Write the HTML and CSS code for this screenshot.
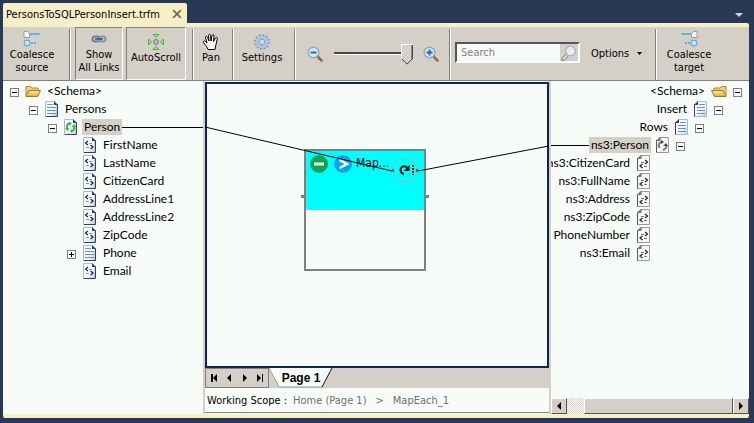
FILE: index.html
```html
<!DOCTYPE html>
<html lang="en">
<head>
<meta charset="utf-8">
<title>PersonsToSQLPersonInsert.trfm</title>
<link rel="stylesheet" href="styles.css">
</head>
<body>
<svg class="defs" aria-hidden="true">
  <defs>
    <linearGradient id="paper" x1="0" y1="0" x2="1" y2="1"><stop offset="0" stop-color="#fff"/><stop offset=".6" stop-color="#f4f7fc"/><stop offset="1" stop-color="#c2cbe0"/></linearGradient>
    <linearGradient id="gold" x1="0" y1="0" x2="0" y2="1"><stop offset="0" stop-color="#fff0a8"/><stop offset="1" stop-color="#e9a93c"/></linearGradient>
    <symbol id="folder" viewBox="0 0 16 14"><path d="M1 12V2.500h4.500l1.500 1.500h6v8z" fill="#f0d070" stroke="#b18a35"/><path d="M1 12.500L4 6.500h11.500L12.500 12.500z" fill="url(#gold)" stroke="#a87925"/></symbol>
    <symbol id="sheet" viewBox="0 0 13 16"><path d="M.5 .5h8.500l3 3v12H.5z" fill="url(#paper)" stroke="#a9b8d4"/><path d="M12.500 3.500v12H1" fill="none" stroke="#343c70"/><path d="M9 0l4 4H9z" fill="#343c70"/></symbol>
    <symbol id="doc" viewBox="0 0 13 16"><use href="#sheet"/><path d="M2 3.500h6M2 6.500h9M2 9.500h9M2 12.500h9" stroke="#5c92db"/></symbol>
    <symbol id="leaf" viewBox="0 0 13 16"><use href="#sheet"/><path d="M5 4L2.500 6 5 8M7.500 8l2.500 2-2.500 2" fill="none" stroke="#222" stroke-width="1.200"/><path d="M6 6.500h3M3 10.500h3" stroke="#6aa3bd"/></symbol>
    <symbol id="loop" viewBox="0 0 13 16"><use href="#sheet"/><path d="M5.500 4.500C3 5 2.500 7 3 10M7.500 12.500c2.500-1 3-3 2.500-5.500" fill="none" stroke="#36bd36" stroke-width="2"/><path d="M5 2.500l3 2-3 2zM1 9h4.500l-2 3zM7.500 8l2.500-3 2 3zM8 10v4l-2-2z" fill="#36bd36"/></symbol>
    <symbol id="rsheet" viewBox="0 0 13 16"><path d="M4 .5h8.500v15H.5v-12z" fill="#f6f6f2" stroke="#999"/><path d="M4 .5v3H.5M.5 3.500v12" fill="none" stroke="#555"/><path d="M0 4l4-4v4z" fill="#777"/></symbol>
    <symbol id="rdoc" viewBox="0 0 13 16"><path d="M4 .5h8.500v15H.5v-12z" fill="url(#paper)" stroke="#a9b8d4"/><path d="M.5 3.500v12" fill="none" stroke="#343c70"/><path d="M0 4l4-4v4z" fill="#343c70"/><path d="M5 3.500h6M3 6.500h8M3 9.500h8M3 12.500h8" stroke="#5c92db"/></symbol>
    <symbol id="rleaf" viewBox="0 0 13 16"><use href="#rsheet"/><path d="M8 5l2.500 2L8 9M5.500 9L3 11l2.500 2" fill="none" stroke="#222" stroke-width="1.200"/><path d="M4 7.500h3M7 11.500h3" stroke="#777"/></symbol>
    <symbol id="rloop" viewBox="0 0 13 16"><use href="#rsheet"/><path d="M6 5C3 5 2 8 3.500 11M7 13c3-1 4-3 3-5" fill="none" stroke="#777" stroke-width="2"/><path d="M5 3l3 2-3 2zM7 9l3-3 2 3z" fill="#444"/></symbol>
    <symbol id="lens" viewBox="0 0 16 16"><path d="M10.500 10.500l4 4" stroke="#9b6a40" stroke-width="2.600" stroke-linecap="round"/><circle cx="6.500" cy="6.500" r="5.300" fill="#d6eafb" stroke="#9ba5b2" stroke-width="1.500"/></symbol>
    <symbol id="link-page" viewBox="0 0 16 16"><path d="M1 .5h3.500l2 2v4H1z" fill="#fff" stroke="#999"/><path d="M7 3h10" stroke="#3ba4dc" stroke-width="1.400"/><circle cx="4" cy="12" r="3" fill="#c4e4f8" stroke="#4f9fd2"/><path d="M8 12h2M11 12h2" stroke="#3ba4dc" stroke-width="1.400"/></symbol>
  </defs>
</svg>
<header class="tabs">
  <div class="file-tab"><span>PersonsToSQLPersonInsert.trfm</span>
    <button class="close" aria-label="Close"><svg width="10" height="8" viewBox="0 0 10 8"><path d="M1 0l8 8M9 0L1 8" stroke="#75633d" stroke-width="1.700"/></svg></button></div>
  <button class="tab-list" aria-label="Open documents"><svg width="8" height="4"><path d="M0 0h8L4 4z" fill="#ced4df"/></svg></button>
</header>
<main class="frame">
  <div class="toolbar">
    <button class="tool coalesce"><svg width="18" height="16"><use href="#link-page" width="16" height="16"/><path d="M15 3h2" stroke="#3ba4dc"/></svg><span>Coalesce<br>source</span></button>
    <i class="sep"></i>
    <button class="tool pressed show"><svg width="16" height="16" viewBox="0 0 16 16"><g fill="none"><rect x="1.500" y="5.500" width="7" height="5" rx="2.500" stroke="#6c7f9a" stroke-width="2"/><rect x="7.500" y="5.500" width="7" height="5" rx="2.500" stroke="#8296b0" stroke-width="2"/><path d="M4 8h8" stroke="#354d70" stroke-width="1.500"/></g></svg><span>Show<br>All Links</span></button>
    <button class="tool pressed short auto"><svg width="18" height="18" viewBox="0 0 18 18"><g fill="#a5e39a" stroke="#40b830"><path d="M6 1.500h6l-3 3zM6 16.500h6l-3-3zM1.500 6v6l3-3zM16.500 6v6l-3-3z"/></g><circle cx="9" cy="9" r="2.500" fill="#bbb" stroke="#777"/></svg><span>AutoScroll</span></button>
    <i class="sep"></i>
    <button class="tool short pan"><svg width="18" height="18" viewBox="0 0 18 18"><path d="M6 16.500C5 13 3 12 1.500 9.500c-.5-1.500 1-2 2-1L5 10 3.500 4.500c0-1.500 1.500-1.500 2 0L7 8 6.500 2.500c0-1.500 2-1.500 2 0L9 8l1-5.500c.3-1.300 2-1 2 .3L11.500 8.500 13.500 5c.7-1.200 2-.5 1.800.6L14 11.500c-.3 2-1 3-1 5z" fill="#fff" stroke="#000"/></svg><span>Pan</span></button>
    <i class="sep"></i>
    <button class="tool short settings"><svg width="18" height="18" viewBox="0 0 18 18"><circle cx="9" cy="9" r="6.800" fill="none" stroke="#769bc4" stroke-width="2" stroke-dasharray="2 1.560"/><circle cx="9" cy="9" r="4.500" fill="none" stroke="#a9c6e4" stroke-width="3.500"/><circle cx="9" cy="9" r="2.800" fill="#dcdad4" stroke="#7d9fc4"/></svg><span>Settings</span></button>
    <i class="sep"></i>
    <div class="zoom">
      <button class="icon-button" aria-label="Zoom out"><svg width="16" height="16" viewBox="0 0 16 16"><use href="#lens"/><path d="M3.500 6.500h6" stroke="#176ec5" stroke-width="2"/></svg></button>
      <input type="range" min="0" max="100" value="100" aria-label="Zoom">
      <button class="icon-button" aria-label="Zoom in"><svg width="16" height="16" viewBox="0 0 16 16"><use href="#lens"/><path d="M3.500 6.500h6M6.500 3.500v6" stroke="#176ec5" stroke-width="2"/></svg></button>
    </div>
    <i class="sep"></i>
    <div class="search"><input type="text" placeholder="Search" aria-label="Search"><button class="icon-button" aria-label="Find"><svg width="18" height="16" viewBox="0 0 18 16"><path d="M7.500 9.500L3 14.500" stroke="#888" stroke-width="3.500" stroke-linecap="round"/><path d="M7 10l-4 4.500" stroke="#eee" stroke-width="1.600"/><circle cx="10.500" cy="6" r="4.800" fill="#e3f0fa" stroke="#a9adb3" stroke-width="1.300"/></svg></button></div>
    <button class="options">Options<svg width="5" height="3"><path d="M0 0h5L2.500 3z"/></svg></button>
    <i class="sep"></i>
    <button class="tool target"><svg width="18" height="16" viewBox="0 0 18 16"><g transform="matrix(-1 0 0 1 18 0)"><use href="#link-page" width="16" height="16"/><path d="M15 3h2" stroke="#3ba4dc"/></g></svg><span>Coalesce<br>target</span></button>
  </div>
  <div class="work">
    <section class="pane source" aria-label="Source schema">
      <ul class="tree">
        <li class="l1"><button class="twist" aria-label="Collapse"></button><svg class="folder"><use href="#folder"/></svg><span>&lt;Schema&gt;</span></li>
        <li class="l2"><button class="twist" aria-label="Collapse"></button><svg class="ic"><use href="#doc"/></svg><span>Persons</span></li>
        <li class="l3"><button class="twist" aria-label="Collapse"></button><svg class="ic"><use href="#loop"/></svg><span class="sel">Person</span><i class="wire"></i></li>
        <li class="l4"><svg class="ic"><use href="#leaf"/></svg><span>FirstName</span></li>
        <li class="l4"><svg class="ic"><use href="#leaf"/></svg><span>LastName</span></li>
        <li class="l4"><svg class="ic"><use href="#leaf"/></svg><span>CitizenCard</span></li>
        <li class="l4"><svg class="ic"><use href="#leaf"/></svg><span>AddressLine1</span></li>
        <li class="l4"><svg class="ic"><use href="#leaf"/></svg><span>AddressLine2</span></li>
        <li class="l4"><svg class="ic"><use href="#leaf"/></svg><span>ZipCode</span></li>
        <li class="l4 parent"><button class="twist closed" aria-label="Expand"></button><svg class="ic"><use href="#doc"/></svg><span>Phone</span></li>
        <li class="l4"><svg class="ic"><use href="#leaf"/></svg><span>Email</span></li>
      </ul>
    </section>
    <section class="center">
      <div class="canvas">
        <div class="node">
          <div class="node-head">
            <svg width="18" height="18"><circle cx="9" cy="9" r="9" fill="#0ca64e"/><path d="M4 9h10" stroke="#fff" stroke-width="3"/></svg>
            <svg class="go" width="18" height="18"><circle cx="9" cy="9" r="9" fill="#0fa5ee"/><path d="M5.500 5l7.500 4-7.500 4" fill="none" stroke="#fff" stroke-width="2.500"/></svg>
            <span>Map...</span>
          </div>
          <svg class="each" width="26" height="26" viewBox="0 0 26 26"><circle cx="13" cy="13" r="12" fill="none" stroke="#b0aaa4"/><path d="M12 17H11.500C8.500 16 8 13 9 11c1.500-2.500 4.500-2.500 6.500 0" fill="none" stroke="#111" stroke-width="2"/><path d="M17.500 8v6h-6z" fill="#111"/><path d="M20 8h2v2h-2zM20 11h2v2h-2zM20 14h2v2h-2zM20 17h2v1h-2z" fill="#111"/><path d="M0 12h2v3H0zM24 12h2v3h-2z" fill="#666"/></svg>
        </div>
        <svg class="wires"><line x1="0" y1="45" x2="187" y2="89"/><line x1="213" y1="89" x2="100%" y2="64"/></svg>
      </div>
      <div class="pages">
        <div class="nav">
          <button aria-label="First page"><svg width="8" height="8"><path d="M1 0h2v8H1zM7 0v8L3 4z"/></svg></button>
          <button aria-label="Previous page"><svg width="8" height="8"><path d="M6 0v8L2 4z"/></svg></button>
          <button aria-label="Next page"><svg width="8" height="8"><path d="M2 0v8l4-4z"/></svg></button>
          <button aria-label="Last page"><svg width="8" height="8"><path d="M1 0v8l4-4zM6 0h1v8H6z"/></svg></button>
        </div>
        <button class="page"><svg class="page-shape" viewBox="0 0 64 20"><path d="M0 0l10 19h43L63 0z" fill="#f8fcf8"/><path d="M0 0l10 19h43" fill="none" stroke="#999"/><path d="M53 19L63 0" stroke="#111"/></svg><span>Page 1</span></button>
      </div>
      <nav class="scope"><span>Working Scope :</span><a href="#home">Home (Page 1)</a><i>&gt;</i><a href="#map">MapEach_1</a></nav>
    </section>
    <section class="pane dest" aria-label="Target schema">
      <ul class="tree">
        <li class="l1"><button class="twist" aria-label="Collapse"></button><svg class="folder mirror"><use href="#folder"/></svg><span>&lt;Schema&gt;</span></li>
        <li class="l2"><button class="twist" aria-label="Collapse"></button><svg class="ic"><use href="#rdoc"/></svg><span>Insert</span></li>
        <li class="l3"><button class="twist" aria-label="Collapse"></button><svg class="ic"><use href="#rdoc"/></svg><span>Rows</span></li>
        <li class="l4 parent"><button class="twist" aria-label="Collapse"></button><svg class="ic"><use href="#rloop"/></svg><span class="sel">ns3:Person</span><i class="wire"></i></li>
        <li class="l5"><svg class="ic"><use href="#rleaf"/></svg><span>ns3:CitizenCard</span></li>
        <li class="l5"><svg class="ic"><use href="#rleaf"/></svg><span>ns3:FullName</span></li>
        <li class="l5"><svg class="ic"><use href="#rleaf"/></svg><span>ns3:Address</span></li>
        <li class="l5"><svg class="ic"><use href="#rleaf"/></svg><span>ns3:ZipCode</span></li>
        <li class="l5"><svg class="ic"><use href="#rleaf"/></svg><span>PhoneNumber</span></li>
        <li class="l5"><svg class="ic"><use href="#rleaf"/></svg><span>ns3:Email</span></li>
      </ul>
      <div class="scroll">
        <button aria-label="Scroll left"><svg width="4" height="8"><path d="M4 0v8L0 4z"/></svg></button>
        <div class="track"></div><div class="thumb"></div>
        <button aria-label="Scroll right"><svg width="4" height="8"><path d="M0 0v8l4-4z"/></svg></button>
      </div>
    </section>
  </div>
</main>
</body>
</html>
```
FILE: styles.css
```css
* { box-sizing: border-box; }
body {
  margin: 0;
  height: 100vh;
  padding: 3px 5px 5px 3px;
  display: flex;
  flex-direction: column;
  overflow: hidden;
  background: #293955;
  color: #000;
  font: 11px/13px "DejaVu Sans Condensed", "DejaVu Sans", sans-serif;
}
button { margin: 0; padding: 0; border: 0; background: none; color: inherit; font: inherit; }
svg { display: block; flex: none; }
ul { list-style: none; margin: 0; padding: 0; }
i { font-style: normal; }
.defs { position: absolute; width: 0; height: 0; }

.tabs { display: flex; justify-content: space-between; flex: none; height: 20px; }
.file-tab {
  display: flex;
  align-items: center;
  justify-content: space-between;
  width: 184px;
  padding: 2px 5px 0 3px;
  background: #f8eec8;
  border-radius: 2px 2px 0 0;
  white-space: nowrap;
}
.tab-list { padding: 4px 6px 0 0; }

.frame {
  flex: 1;
  min-height: 0;
  display: flex;
  flex-direction: column;
  padding: 4px 0;
  background: #f8eec8;
  border-radius: 0 2px 2px 2px;
}
.toolbar {
  display: flex;
  flex: none;
  height: 54px;
  background: #d4d0c8;
  border-bottom: 1px solid #808080;
}
.sep { flex: none; width: 2px; margin-top: 2px; background: #808080; border-right: 1px solid #fff; }
.tool {
  display: flex;
  flex-direction: column;
  align-items: center;
  flex: none;
  padding-top: 4px;
  text-align: center;
  white-space: nowrap;
}
.tool span { margin-top: 1px; }
.tool.short { padding-top: 6px; }
.tool.short span { margin-top: 0; }
.pressed { border: 1px solid #fff; border-color: #808080 #fff #fff #808080; padding-top: 3px; }
.pressed.short { padding-top: 5px; }
.coalesce { width: 58px; margin-right: 8px; }
.show { width: 48px; margin: 0 3px 0 4px; }
.auto { width: 60px; margin-right: 6px; }
.pan { width: 34px; margin-right: 4px; }
.settings { width: 56px; margin-right: 4px; }
.zoom { flex: none; display: flex; align-items: center; width: 153px; padding: 0 10px 0 11px; justify-content: space-between; }
.zoom input { appearance: none; width: 80px; height: 22px; margin: 2px 0 0; background: none; }
.zoom input::-webkit-slider-runnable-track {
  height: 22px;
  background: linear-gradient(#444 0 2px, #fff 2px 3px) 1px 8px / 78px 3px no-repeat;
}
.zoom input::-webkit-slider-thumb {
  appearance: none;
  width: 12px;
  height: 21px;
  clip-path: polygon(0 0, 12px 0, 12px 15px, 6px 21px, 0 15px);
  background:
    linear-gradient(135deg, #0000 36%, #444 36%) 100% 100% / 6px 6px no-repeat,
    linear-gradient(225deg, #0000 36%, #444 36%) 0 100% / 6px 6px no-repeat,
    linear-gradient(#fff, #fff) 0 0 / 12px 1px no-repeat,
    linear-gradient(#fff, #fff) 0 0 / 1px 15px no-repeat,
    linear-gradient(#444, #444) 100% 0 / 1px 15px no-repeat,
    linear-gradient(#888, #888) 10px 0 / 1px 15px no-repeat,
    #d4d0c8;
}
.search {
  display: flex;
  flex: none;
  align-self: center;
  width: 125px;
  height: 21px;
  margin: 0 11px 2px 4px;
  border: 2px solid;
  border-color: #555 #fff #fff #555;
}
.search input { flex: 1; min-width: 0; padding: 0 4px; border: 0; background: #f8fcf8; font: inherit; }
.search input::placeholder { color: #808080; opacity: 1; }
.options { display: flex; flex: none; align-items: center; justify-content: space-between; width: 51px; margin-right: 13px; }
.target { width: 64px; }

.work { flex: 1; min-height: 0; display: flex; background: #f8fcf8; }
.pane { display: flex; flex-direction: column; min-width: 0; padding-top: 1px; overflow: hidden; }
.source { flex: none; width: 202px; border-right: 2px solid #d4d0c8; }
.dest { flex: none; width: 200px; border-left: 2px solid #d4d0c8; }
.tree { flex: 1; min-height: 0; font: 12px/16px Lato, sans-serif; }
.tree li { display: flex; align-items: center; height: 18px; white-space: nowrap; }
.tree span { padding: 0 2px; }
.tree .sel { background: #d4d0c8; }
.ic { width: 13px; height: 16px; margin: 0 5px 0 7px; }
.folder { width: 16px; height: 14px; margin: 0 4px 0 6px; }
.mirror { transform: scaleX(-1); }
.twist {
  flex: none;
  width: 9px;
  height: 9px;
  margin-top: 2px;
  border: 1px solid #808080;
  background: linear-gradient(#000, #000) 1px 3px / 5px 1px no-repeat, #fff;
}
.closed {
  background:
    linear-gradient(#000, #000) 1px 3px / 5px 1px no-repeat,
    linear-gradient(#000, #000) 3px 1px / 1px 5px no-repeat, #fff;
}
.wire { flex: 1; height: 1px; background: #000; }
.source .l1 { padding-left: 7px; }
.source .l2 { padding-left: 26px; }
.source .l3 { padding-left: 45px; }
.source .l4 { padding-left: 73px; }
.source .parent { padding-left: 64px; }
.dest li { flex-direction: row-reverse; }
.dest .ic { margin: 0 7px 0 5px; }
.dest .folder { margin: 0 6px 0 4px; }
.dest .l1 { padding-right: 7px; }
.dest .l2 { padding-right: 26px; }
.dest .l3 { padding-right: 45px; }
.dest .parent { padding-right: 64px; }
.dest .l5 { padding-right: 92px; }

.center { flex: 1; min-width: 0; display: flex; flex-direction: column; padding-top: 1px; }
.canvas { position: relative; flex: 1; border: 2px solid #0a246a; }
.node {
  position: absolute;
  left: 97px;
  top: 65px;
  width: 122px;
  height: 122px;
  border: 2px solid #808080;
}
.node::before, .node::after { content: ""; position: absolute; top: 44px; width: 3px; height: 3px; background: #808080; }
.node::before { left: -5px; }
.node::after { right: -5px; }
.node-head { display: flex; height: 59px; padding: 4px 0 0 4px; background: #00ffff; font-size: 12px; }
.go { margin: 0 4px 0 6px; }
.node-head span { margin-top: 2px; }
.each { position: absolute; left: 86px; top: 6px; }
.wires { position: absolute; left: -2px; top: -2px; width: calc(100% + 4px); height: calc(100% + 4px); pointer-events: none; }
.wires line { stroke: #000; }

.pages { display: flex; flex: none; height: 20px; background: #d4d0c8; }
.nav { display: flex; flex: none; align-items: center; justify-content: space-around; width: 64px; border: 1px solid #808080; }
.page { position: relative; width: 64px; font: bold 12px/16px "Liberation Sans", sans-serif; }
.page-shape { position: absolute; left: 0; top: 0; width: 64px; height: 20px; }
.page span { position: relative; }
.scope { display: flex; flex: none; height: 25px; margin-bottom: 1px; padding: 6px 2px; border-bottom: 1px solid #808080; white-space: nowrap; }
.scope a { margin-left: 6px; color: #707070; text-decoration: none; }
.scope i { margin: 0 3px 0 9px; color: #707070; }

.scroll { display: flex; flex: none; height: 16px; }
.scroll button, .thumb { background: #d4d0c8; border: 1px solid; border-color: #fff #555 #555 #fff; }
.scroll button { display: flex; flex: none; align-items: center; justify-content: center; width: 16px; }
.track { width: 17px; background: repeating-conic-gradient(#d4d0c8 0 25%, #fff 0 50%) 0 0 / 2px 2px; }
.thumb { flex: 1; }
```
